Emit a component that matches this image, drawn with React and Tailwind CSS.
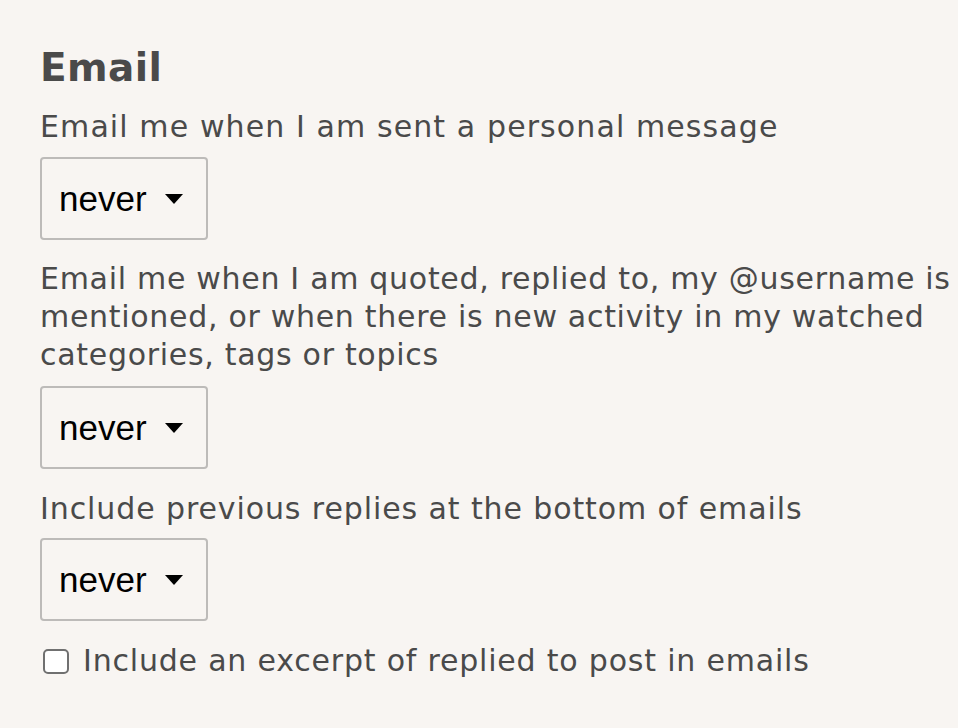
export default function App() {
  const font = { fontFamily: '"DejaVu Sans", sans-serif' }

  function Select() {
    return (
      <div className="flex h-[83px] w-[168px] items-center justify-between rounded-[4px] border-2 border-[#bdbbb9] pl-[17px] pr-[23px] bg-[#f8f5f2]">
        <span className="text-[35px] leading-none text-black" style={{ fontFamily: '"Liberation Sans", Arial, sans-serif' }}>never</span>
        <svg width="18" height="10" viewBox="0 0 18 10">
          <path d="M0 0 L18 0 L9 10 Z" fill="#000" />
        </svg>
      </div>
    )
  }

  return (
    <div className="min-h-screen w-full bg-[#f8f5f2] text-[#4a4a4a]" style={font}>
      <div className="pl-10 pt-[46px]">
        <h2 className="text-[39px] font-bold leading-[44px] tracking-[0.4px]">Email</h2>

        <div className="mt-[18px] text-[30px] leading-[38px] tracking-[1.1px] whitespace-nowrap">Email me when I am sent a personal message</div>
        <div className="mt-[11px]"><Select /></div>

        <div className="mt-[20px] text-[30px] leading-[38px] tracking-[0.7px] whitespace-nowrap">
          Email me when I am quoted, replied to, my @username is<br />
          mentioned, or when there is new activity in my watched<br />
          categories, tags or topics
        </div>
        <div className="mt-[12px]"><Select /></div>

        <div className="mt-[21px] text-[30px] leading-[38px] tracking-[0.9px] whitespace-nowrap">Include previous replies at the bottom of emails</div>
        <div className="mt-[10px]"><Select /></div>

        <label className="mt-[21px] flex items-center gap-[14px] text-[30px] leading-[38px] tracking-[0.8px] whitespace-nowrap">
          <span className="ml-[3px] block h-[25px] w-[26px] rounded-[5px] border-2 border-[#707070] bg-white"></span>
          Include an excerpt of replied to post in emails
        </label>
      </div>
    </div>
  )
}
